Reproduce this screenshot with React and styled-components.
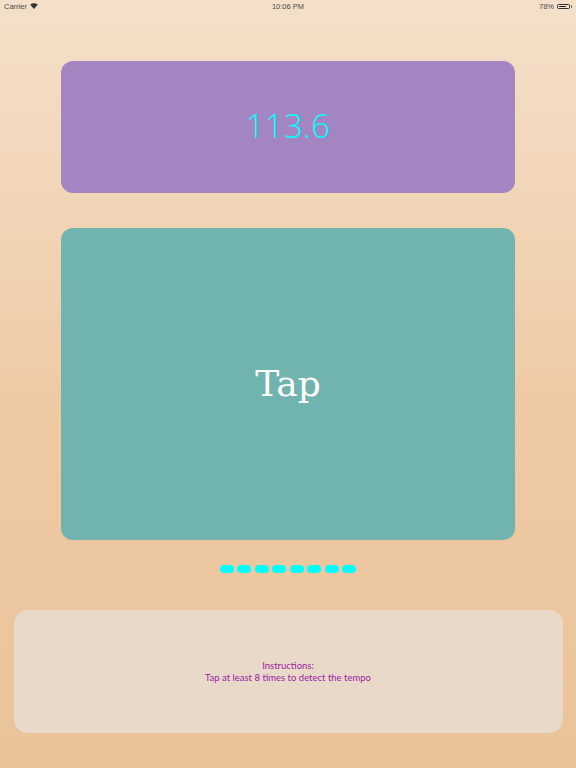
import React from "react";
import styled, { createGlobalStyle } from "styled-components";

const Global = createGlobalStyle`
  html, body { margin: 0; padding: 0; }
  body { width: 576px; height: 768px; overflow: hidden; }
  #root { height: 768px; }
`;

const Screen = styled.div`
  width: 576px;
  height: 768px;
  background: linear-gradient(180deg, #f4e0ca 0%, #eec9a2 55%, #eac39a 100%);
  display: flex;
  flex-direction: column;
  font-family: "Liberation Sans", Arial, sans-serif;
`;

const StatusBar = styled.div`
  height: 12px;
  padding: 0 4px;
  display: flex;
  align-items: center;
  justify-content: space-between;
  font-size: 7.5px;
  color: #4a4a4a;
  position: relative;
`;

const StatusSide = styled.div`
  display: flex;
  align-items: center;
  gap: 3px;
`;

const Clock = styled.div`
  position: absolute;
  left: 0;
  right: 0;
  text-align: center;
  pointer-events: none;
`;

const Battery = styled.div`
  display: flex;
  align-items: center;
  gap: 1px;
`;

const BatteryBody = styled.div`
  width: 13px;
  height: 5px;
  border: 1px solid #333;
  border-radius: 1.5px;
  padding: 1px;
  box-sizing: border-box;
  display: flex;
`;

const BatteryFill = styled.div`
  height: 100%;
  background: #222;
  border-radius: 0.5px;
`;

const BatteryNub = styled.div`
  width: 1px;
  height: 3px;
  background: #777;
`;

const Main = styled.div`
  display: flex;
  flex-direction: column;
  align-items: center;
  padding-top: 49px;
`;

const TempoCard = styled.div`
  width: 454px;
  height: 132px;
  border-radius: 12px;
  background: #a385c1;
  display: flex;
  align-items: center;
  justify-content: center;
  color: #00ffff;
  font-family: "Open Sans", "Liberation Sans", sans-serif;
  font-weight: 300;
  font-size: 33px;
  letter-spacing: 0.3px;
  padding-bottom: 4px;
  box-sizing: border-box;
`;

const TapCard = styled.div`
  margin-top: 35px;
  width: 454px;
  height: 312px;
  border-radius: 12px;
  background: #71b3af;
  display: flex;
  align-items: center;
  justify-content: center;
  color: #ffffff;
  font-family: "DejaVu Serif", "Liberation Serif", serif;
  font-size: 36px;
  padding-bottom: 1px;
  box-sizing: border-box;
`;

const Dots = styled.div`
  margin-top: 25px;
  display: flex;
  gap: 3.5px;
  height: 8px;
`;

const Dot = styled.div`
  width: 14px;
  height: 8px;
  border-radius: 4px;
  background: ${(p) => (p.$on ? "#00ffff" : "transparent")};
`;

const InfoCard = styled.div`
  margin-top: 37px;
  width: 549px;
  height: 123px;
  border-radius: 14px;
  background: #e9d9c8;
  display: flex;
  flex-direction: column;
  align-items: center;
  justify-content: center;
  color: #9a22a4;
  font-family: Lato, "Open Sans", sans-serif;
  font-size: 9.5px;
  line-height: 12px;
  box-sizing: border-box;
`;

const Wifi = () => (
  <svg width="8" height="6" viewBox="0 0 16 12">
    <path d="M8 12 L0.5 3.5 A11 11 0 0 1 15.5 3.5 Z" fill="#333" />
  </svg>
);

export default function App() {
  return (
    <>
      <Global />
      <Screen>
        <StatusBar>
          <StatusSide>
            <span>Carrier</span>
            <Wifi />
          </StatusSide>
          <Clock>10:06 PM</Clock>
          <StatusSide>
            <span>78%</span>
            <Battery>
              <BatteryBody>
                <BatteryFill style={{ width: "78%" }} />
              </BatteryBody>
              <BatteryNub />
            </Battery>
          </StatusSide>
        </StatusBar>
        <Main>
          <TempoCard>113.6</TempoCard>
          <TapCard>Tap</TapCard>
          <Dots>
            {Array.from({ length: 8 }).map((_, i) => (
              <Dot key={i} $on />
            ))}
          </Dots>
          <InfoCard>
            <div>Instructions:</div>
            <div>Tap at least 8 times to detect the tempo</div>
          </InfoCard>
        </Main>
      </Screen>
    </>
  );
}
